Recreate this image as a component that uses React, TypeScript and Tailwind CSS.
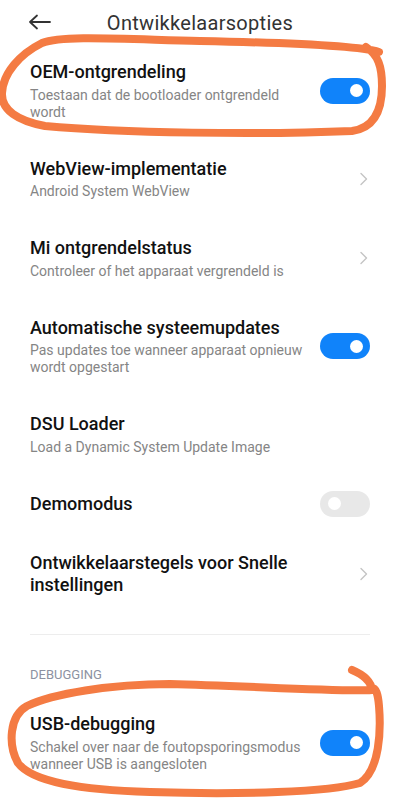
import React from 'react';

type Row = {
  title: React.ReactNode;
  sub?: React.ReactNode;
  kind: 'on' | 'off' | 'chevron' | 'none';
};

const ROWS: Row[] = [
  {
    title: 'OEM-ontgrendeling',
    sub: (
      <>
        Toestaan dat de bootloader ontgrendeld
        <br />
        wordt
      </>
    ),
    kind: 'on',
  },
  { title: 'WebView-implementatie', sub: 'Android System WebView', kind: 'chevron' },
  { title: 'Mi ontgrendelstatus', sub: 'Controleer of het apparaat vergrendeld is', kind: 'chevron' },
  {
    title: 'Automatische systeemupdates',
    sub: (
      <>
        Pas updates toe wanneer apparaat opnieuw
        <br />
        wordt opgestart
      </>
    ),
    kind: 'on',
  },
  { title: 'DSU Loader', sub: 'Load a Dynamic System Update Image', kind: 'none' },
  { title: 'Demomodus', kind: 'off' },
  {
    title: (
      <>
        Ontwikkelaarstegels voor Snelle
        <br />
        instellingen
      </>
    ),
    kind: 'chevron',
  },
];

function Toggle({ on }: { on: boolean }) {
  return (
    <div
      className={`w-[50px] h-[26px] -my-[2px] rounded-full flex items-center shrink-0 ${
        on ? 'bg-[#1083fa] justify-end' : 'bg-[#e8e8e8] justify-start'
      }`}
    >
      <div className={`w-[13px] h-[13px] rounded-full bg-white ${on ? 'mr-[7px]' : 'ml-[8px]'}`} />
    </div>
  );
}

function Chevron() {
  return (
    <svg width="10" height="14" viewBox="0 0 10 14" className="shrink-0 mr-[1px]">
      <path d="M2 1.5 L7.5 7 L2 12.5" fill="none" stroke="#c4c4c4" strokeWidth="1.4" strokeLinecap="round" strokeLinejoin="round" />
    </svg>
  );
}

function SettingRow({ row }: { row: Row }) {
  return (
    <div className="flex items-center px-[30px] py-[18.5px]">
      <div className="flex-1 min-w-0 pr-[10px]">
        <div className="text-[18px] leading-[22px] font-medium text-[#111111] whitespace-nowrap">{row.title}</div>
        {row.sub && (
          <div className="mt-[3.5px] text-[14px] leading-[17px] text-[#858585] whitespace-nowrap">{row.sub}</div>
        )}
      </div>
      {row.kind === 'on' && <Toggle on />}
      {row.kind === 'off' && <Toggle on={false} />}
      {row.kind === 'chevron' && <Chevron />}
    </div>
  );
}

export default function App() {
  return (
    <div className="relative w-[400px] h-[800px] overflow-hidden bg-white font-['Roboto',sans-serif]">
      {/* Header */}
      <div className="relative h-[42.5px] pt-[10.5px]">
        <svg width="24" height="16" viewBox="0 0 24 16" className="absolute left-[28px] top-[14px]">
          <path d="M22 8 H2 M9 1.5 L2 8 L9 14.5" fill="none" stroke="#333333" strokeWidth="1.8" strokeLinecap="round" strokeLinejoin="round" />
        </svg>
        <div className="text-center text-[20px] leading-[24px] tracking-[0.3px] text-[#333333]">Ontwikkelaarsopties</div>
      </div>

      {ROWS.map((r, i) => (
        <SettingRow key={i} row={r} />
      ))}

      <div className="mx-[30px] mt-[20px] h-px bg-[#ededed]" />

      <div className="px-[30px] pt-[32px] text-[13px] leading-[16px] text-[#8c91a1]">DEBUGGING</div>

      <div className="mt-[11.5px]">
        <SettingRow
          row={{
            title: 'USB-debugging',
            sub: (
              <>
                Schakel over naar de foutopsporingsmodus
                <br />
                wanneer USB is aangesloten
              </>
            ),
            kind: 'on',
          }}
        />
      </div>

      {/* hand-drawn annotations */}
      <svg width="400" height="800" viewBox="0 0 400 800" className="absolute inset-0 pointer-events-none">
        <g fill="none" stroke="#f47b43" strokeWidth="8" strokeLinecap="round" strokeLinejoin="round">
          <path d="M379 52 C360 46, 300 43, 200 41 C120 39, 62 35, 42 43 C20 54, 3 73, 2 93 C1 110, 18 121, 45 126 C120 133, 260 135, 352 131 C374 128, 382 110, 382 86 C382 66, 378 55, 366 47" />
          <path d="M352 670 C364 675, 371 682, 372 690 C340 692, 250 686, 170 684 C110 684, 52 694, 27 706 C9 716, 8 745, 18 763 C32 782, 80 790, 150 792 C240 795, 330 792, 360 783 C380 770, 381 730, 379 706 C378 694, 376 688, 372 688" />
        </g>
      </svg>
    </div>
  );
}
